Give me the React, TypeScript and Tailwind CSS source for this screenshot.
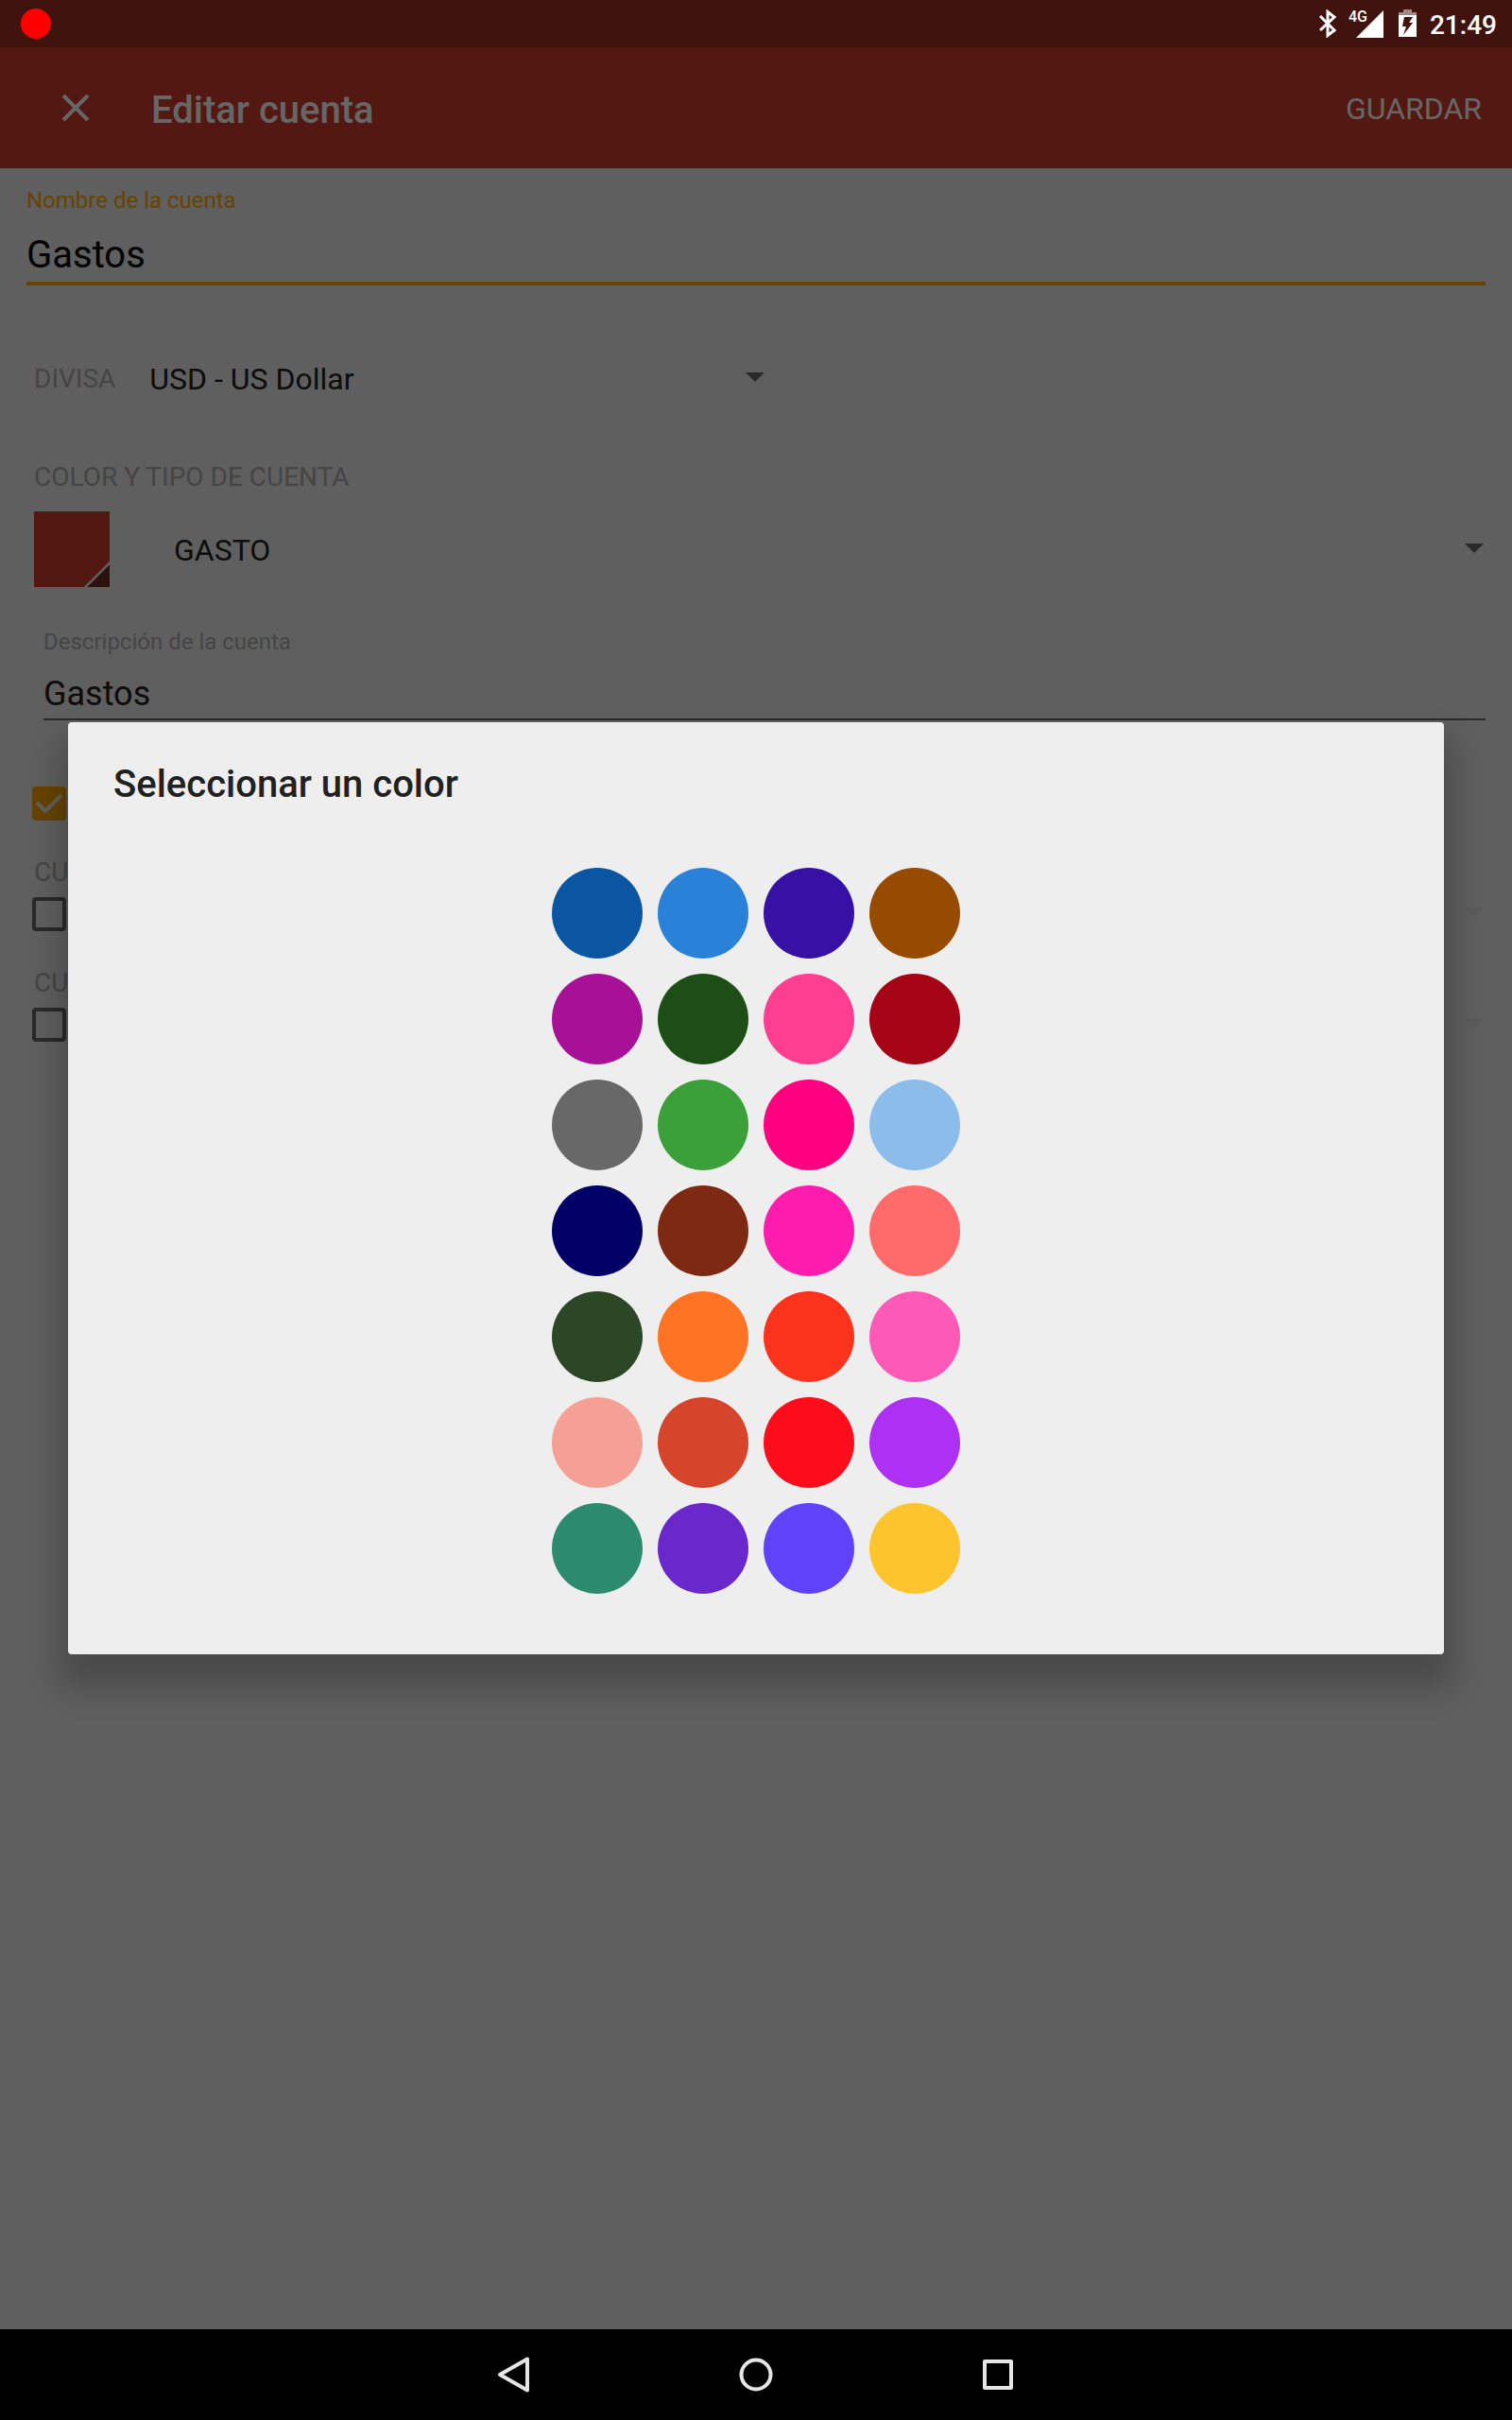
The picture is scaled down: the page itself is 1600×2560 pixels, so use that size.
import { useState } from "react";
import type { ReactNode } from "react";

const COLORS = [
  "#0B56A2", "#2982D8", "#3611A3", "#974B00",
  "#A61197", "#1D4E16", "#FF3D91", "#A50316",
  "#686868", "#3BA03A", "#FF0080", "#8BBCEA",
  "#000066", "#7E2A13", "#FE1CAF", "#FF6B6B",
  "#2C4726", "#FF7424", "#FC331C", "#FD5AB8",
  "#F69F95", "#D6452B", "#FD0D1B", "#AD30F3",
  "#2C8A6D", "#6A27CB", "#5F42FA", "#FDC42E",
];

function StatusBar() {
  return (
    <header className="flex h-[50px] items-center justify-between bg-[#41130e] pl-[22px] pr-4 text-white">
      <span className="size-8 rounded-full bg-[#ff0000]" />
      <div className="flex h-full items-center">
        <svg className="mr-3 h-[30px] w-5" viewBox="0 0 20 30" fill="none" stroke="currentColor" strokeWidth="3">
          <path d="M2 7l15 15-7 5.500V2.500L17 8 2 22" />
        </svg>
        <div className="relative h-[30px] w-[38px]">
          <svg className="h-full w-full" viewBox="0 0 38 30">
            <path d="M37 1v29H8z" fill="currentColor" />
          </svg>
          <span className="absolute left-0 top-0 text-[16px] font-medium leading-4">4G</span>
        </div>
        <svg className="ml-[11px] h-[30px] w-7" viewBox="0 0 28 30">
          <path d="M9 0h9v3h5v3H4V3h5z" fill="#a08986" />
          <path
            d="M4 6h19v23H4zM10 8l-2 10h4l-3 9 10-13h-4l4-6z"
            fill="currentColor"
            fillRule="evenodd"
          />
        </svg>
        <time className="ml-[9px] pt-[3px] text-[28px] font-medium leading-[50px]">21:49</time>
      </div>
    </header>
  );
}

function Arrow({ className }: { className: string }) {
  return (
    <svg className={`pointer-events-none absolute h-[10px] w-5 ${className}`} viewBox="0 0 20 10" fill="currentColor">
      <path d="M0 0h20L10 10z" />
    </svg>
  );
}

function Check({ label, defaultChecked }: { label: string; defaultChecked?: boolean }) {
  return (
    <span className="relative block size-9">
      <input
        type="checkbox"
        aria-label={label}
        defaultChecked={defaultChecked}
        className="peer block size-9 appearance-none rounded-[4px] border-4 border-[#696969] checked:border-[#ffa900] checked:bg-[#ffa900]"
      />
      <svg
        className="pointer-events-none absolute inset-0 hidden size-9 text-[#eeeeee] peer-checked:block"
        viewBox="0 0 36 36"
        fill="none"
        stroke="currentColor"
        strokeWidth="4"
      >
        <path d="M5 17l9 9L31 9" />
      </svg>
    </span>
  );
}

function Caption({ children, htmlFor }: { children: ReactNode; htmlFor?: string }) {
  return (
    <label htmlFor={htmlFor} className="block pt-px text-[28px] leading-8 text-[#acacac]">
      {children}
    </label>
  );
}

function AccountForm({ color }: { color: string }) {
  return (
    <form className="text-[#212121]">
      <div className="px-7 pt-4">
        <label htmlFor="name" className="block text-[24px] leading-9 text-[#ffa900]">
          Nombre de la cuenta
        </label>
        <input
          id="name"
          defaultValue="Gastos"
          className="mt-3 block h-[60px] w-full border-b-4 border-[#ffa900] bg-transparent text-[40px] text-black outline-none"
        />
      </div>

      <div className="mt-[74px] flex items-center px-9">
        <Caption htmlFor="currency">DIVISA</Caption>
        <div className="relative ml-9 w-[651px]">
          <select id="currency" className="block h-12 w-full appearance-none bg-transparent pt-px text-[32px] outline-none">
            <option>USD - US Dollar</option>
          </select>
          <Arrow className="right-0 top-[18px] text-[#696969]" />
        </div>
      </div>

      <div className="mt-16 pl-9 pr-[30px]">
        <Caption htmlFor="type">COLOR Y TIPO DE CUENTA</Caption>
        <div className="mt-5 flex items-center">
          <button type="button" aria-label="Color de la cuenta" className="size-20" style={{ backgroundColor: color }}>
            <svg className="size-20" viewBox="0 0 80 80">
              <path d="M80 54v26H54z" fill="#6e2d25" />
              <path d="M81 53.500L53.500 81" stroke="#eeeeee" strokeWidth="2.500" />
            </svg>
          </button>
          <div className="relative ml-[68px] flex-1">
            <select id="type" className="block h-12 w-full appearance-none bg-transparent pt-px text-[32px] outline-none">
              <option>GASTO</option>
            </select>
            <Arrow className="right-0 top-[18px] text-[#696969]" />
          </div>
        </div>
      </div>

      <div className="mt-10 pl-[46px] pr-7">
        <label htmlFor="description" className="block text-[24px] leading-9 text-[#acacac]">
          Descripción de la cuenta
        </label>
        <input
          id="description"
          defaultValue="Gastos"
          className="mt-2 block h-[57px] w-full border-b-2 border-[#696969] bg-transparent pt-[2px] text-[36px] outline-none"
        />
      </div>

      <div className="mt-[70px] pl-[34px] pr-[30px]">
        <Check label="Marcador de posición" defaultChecked />
        <div className="ml-[2px] mt-[38px]">
          <Caption>CUENTA PADRE</Caption>
        </div>
        <div className="relative mt-[10px]">
          <Check label="Cuenta padre" />
          <Arrow className="right-0 top-[11px] text-[#e2e2e2]" />
        </div>
        <div className="ml-[2px] mt-[38px]">
          <Caption>CUENTA DE TRANSFERENCIA</Caption>
        </div>
        <div className="relative mt-[10px]">
          <Check label="Cuenta de transferencia" />
          <Arrow className="right-0 top-[11px] text-[#e2e2e2]" />
        </div>
      </div>
    </form>
  );
}

function ColorDialog({ onPick }: { onPick: (color: string) => void }) {
  return (
    <div
      role="dialog"
      aria-labelledby="dialog-title"
      className="w-full rounded-[4px] bg-[#eeeeee] px-12 pb-16 pt-[42px] shadow-[0_26px_32px_10px_rgba(0,0,0,0.22)]"
    >
      <h2 id="dialog-title" className="text-[40px] font-medium leading-[48px] text-[#212121]">
        Seleccionar un color
      </h2>
      <div className="mx-auto mt-16 grid w-fit grid-cols-4 gap-4">
        {COLORS.map((color) => (
          <button
            key={color}
            type="button"
            aria-label={color}
            onClick={() => onPick(color)}
            className="size-24 rounded-full"
            style={{ backgroundColor: color }}
          />
        ))}
      </div>
    </div>
  );
}

function NavBar() {
  return (
    <nav className="flex h-24 items-center justify-center gap-40 bg-black text-[#e6e6e6]">
      <button type="button" aria-label="Atrás">
        <svg className="h-24 w-24" viewBox="0 0 96 96" fill="none" stroke="currentColor" strokeWidth="4" strokeLinejoin="round">
          <path d="M62 31.500v33L33 48z" />
        </svg>
      </button>
      <button type="button" aria-label="Inicio">
        <svg className="h-24 w-24" viewBox="0 0 96 96" fill="none" stroke="currentColor" strokeWidth="4">
          <circle cx="48" cy="48" r="15.500" />
        </svg>
      </button>
      <button type="button" aria-label="Recientes">
        <svg className="h-24 w-24" viewBox="0 0 96 96" fill="none" stroke="currentColor" strokeWidth="4" strokeLinejoin="round">
          <path d="M34 34h28v28H34z" />
        </svg>
      </button>
    </nav>
  );
}

export default function App() {
  const [color, setColor] = useState("#cf3c2d");
  return (
    <div className="flex min-h-screen flex-col font-['Roboto',sans-serif]">
      <StatusBar />
      <main className="relative flex-1 bg-[#eeeeee]">
        <div className="flex h-32 items-center bg-[#cf3c2d] pl-16 pr-8 text-white">
          <button type="button" aria-label="Cerrar">
            <svg className="size-8" viewBox="0 0 32 32" fill="none" stroke="currentColor" strokeWidth="4">
              <path d="M3 3l26 26M29 3L3 29" />
            </svg>
          </button>
          <h1 className="ml-16 flex-1 pt-[5px] text-[40px] font-medium leading-[48px]">Editar cuenta</h1>
          <button type="button" className="pt-px text-[32px] leading-10">GUARDAR</button>
        </div>
        <AccountForm color={color} />
        <div className="absolute inset-0 flex items-center justify-center bg-black/60 px-[72px]">
          <ColorDialog onPick={setColor} />
        </div>
      </main>
      <NavBar />
    </div>
  );
}
